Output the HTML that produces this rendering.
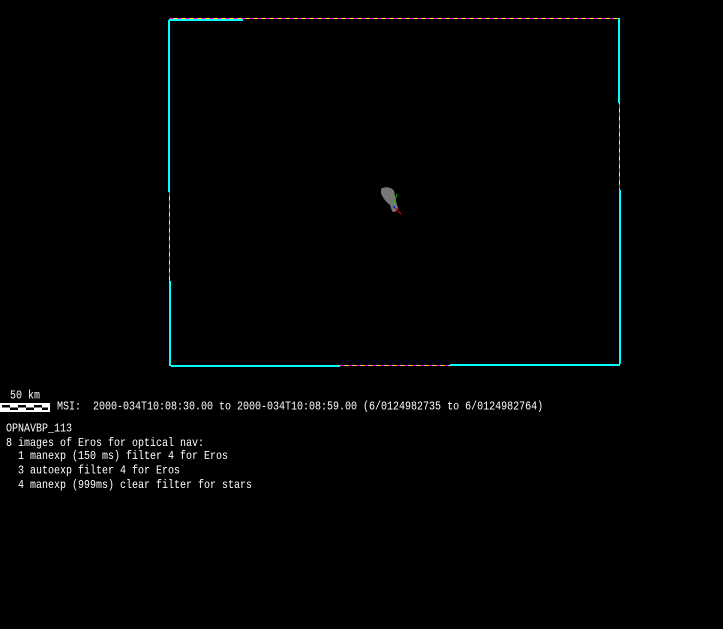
<!DOCTYPE html>
<html><head><style>
body{margin:0;background:#000;width:723px;height:629px;overflow:hidden;position:relative;font-family:"Liberation Mono",monospace;font-size:10px;color:#fff}
.t{position:absolute;white-space:pre;line-height:14px;transform-origin:0 0;transform:scaleY(1.2)}
</style></head><body>
<svg width="723" height="629" style="position:absolute;left:0;top:0" shape-rendering="crispEdges">
<rect x="169.5" y="18.5" width="450" height="347" fill="none" stroke="#ff0" stroke-width="1"/>
<rect x="169.5" y="18.5" width="450" height="347" fill="none" stroke="#f0f" stroke-width="1" stroke-dasharray="4,4"/>
<path d="M169 20H243M169 20V192M170 281V366M171 366H340M450 365H620M619 18V103M620 190V364" stroke="#0ff" stroke-width="2" fill="none"/>
<g transform="translate(360,175)" shape-rendering="auto">
<path d="M21 14 C24 11 32 12 34 16 L36 26 L38 33 C37 37 33 38 32 36 L30 30 C26 27 22 22 21 18 Z" fill="#777"/>
<path d="M33 31 L37 19" stroke="#0c0" stroke-width="1"/>
<path d="M33 31 L37 35" stroke="#00f" stroke-width="1"/>
<path d="M35 33 L41 39" stroke="#e00" stroke-width="1"/>
</g>
<rect x="0" y="403" width="50" height="9" fill="#fff"/>
<rect x="2" y="405" width="8" height="2.5" fill="#000"/><rect x="10" y="407.5" width="8" height="2.5" fill="#000"/>
<rect x="18" y="405" width="8" height="2.5" fill="#000"/><rect x="26" y="407.5" width="8" height="2.5" fill="#000"/>
<rect x="34" y="405" width="8" height="2.5" fill="#000"/><rect x="42" y="407.5" width="6" height="2.5" fill="#000"/>
</svg>
<div class="t" style="left:10px;top:389px">50 km</div>
<div class="t" style="left:57px;top:400px">MSI:  2000-034T10:08:30.00 to 2000-034T10:08:59.00 (6/0124982735 to 6/0124982764)</div>
<div class="t" style="left:6px;top:423px;line-height:11.7px">OPNAVBP_113
8 images of Eros for optical nav:
  1 manexp (150 ms) filter 4 for Eros
  3 autoexp filter 4 for Eros
  4 manexp (999ms) clear filter for stars</div>
</body></html>
